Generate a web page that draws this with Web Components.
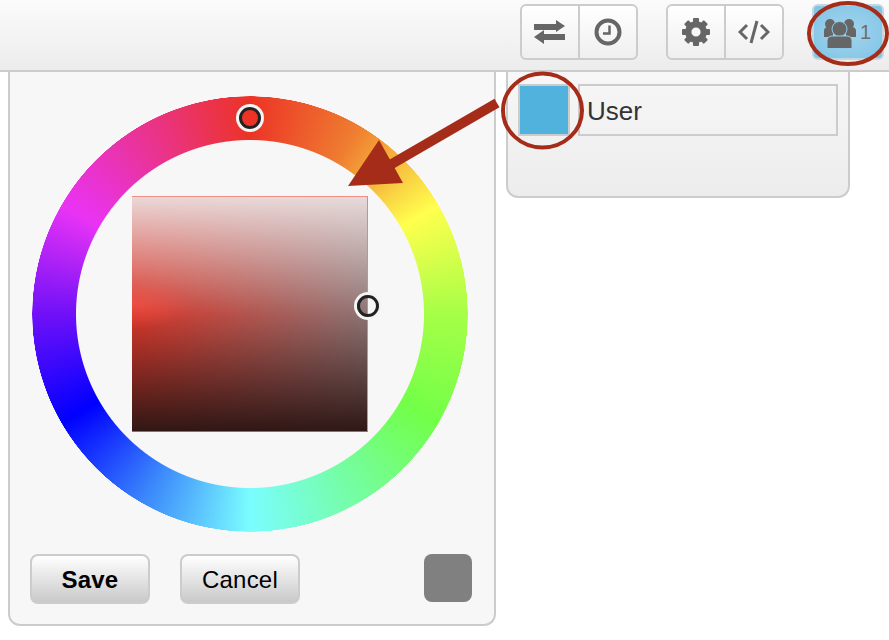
<!DOCTYPE html>
<html lang="en">
<head>
<meta charset="utf-8">
<title>Users</title>
<style>
  html, body { margin: 0; background: #fff; }
  body { font-family: 'Liberation Sans', Arial, sans-serif; color: #333; }
</style>
</head>
<body>
<color-app>
  <top-bar slot="bar">
    <tool-group>
      <tool-button>
        <svg width="32" height="24" viewBox="0 0 32 24" fill="#666"><path d="M0 4h22V0l9 6-9 6V10H0z"/><path d="M31 14H10V10L0 17l10 7V20H31z"/></svg>
      </tool-button>
      <tool-button>
        <svg width="28" height="28" viewBox="0 0 28 28" fill="none" stroke="#666"><circle cx="14" cy="14" r="11.500" stroke-width="4"/><path d="M15.500 7.500V15.500H9" stroke-width="2.500"/></svg>
      </tool-button>
    </tool-group>
    <tool-group>
      <tool-button>
        <svg width="28" height="28" viewBox="0 0 28 28" fill="#666">
          <circle cx="14" cy="14" r="7.700" fill="none" stroke="#666" stroke-width="6.200"/>
          <g>
            <rect x="11" y="0" width="6" height="6" rx="1"/>
            <rect x="11" y="0" width="6" height="6" rx="1" transform="rotate(45 14 14)"/>
            <rect x="11" y="0" width="6" height="6" rx="1" transform="rotate(90 14 14)"/>
            <rect x="11" y="0" width="6" height="6" rx="1" transform="rotate(135 14 14)"/>
            <rect x="11" y="0" width="6" height="6" rx="1" transform="rotate(180 14 14)"/>
            <rect x="11" y="0" width="6" height="6" rx="1" transform="rotate(225 14 14)"/>
            <rect x="11" y="0" width="6" height="6" rx="1" transform="rotate(270 14 14)"/>
            <rect x="11" y="0" width="6" height="6" rx="1" transform="rotate(315 14 14)"/>
          </g>
        </svg>
      </tool-button>
      <tool-button>
        <svg width="32" height="24" viewBox="0 0 32 24" fill="none" stroke="#666" stroke-width="3"><path d="M9 5 2 12l7 7M23 5l7 7-7 7"/><path d="M19 1 13 23"/></svg>
      </tool-button>
    </tool-group>
    <users-button count="1"></users-button>
  </top-bar>

  <picker-panel slot="picker"></picker-panel>
  <users-panel slot="users" name="User"></users-panel>
  <call-outs slot="notes"></call-outs>
</color-app>

<script>
const appTemplate = document.createElement('template')
appTemplate.innerHTML = `
  <style>
    :host { display: block; position: relative; width: 889px; height: 640px; overflow: hidden; }
    .main { display: flex; align-items: flex-start; padding-left: 8px; gap: 10px; }
  </style>
  <slot name="bar"></slot>
  <div class="main">
    <slot name="picker"></slot>
    <slot name="users"></slot>
  </div>
  <slot name="notes"></slot>
`
customElements.define('color-app', class extends HTMLElement {
  constructor () {
    super()
    this.attachShadow({ mode: 'open' }).appendChild(appTemplate.content.cloneNode(true))
  }
})

const barTemplate = document.createElement('template')
barTemplate.innerHTML = `
  <style>
    :host {
      display: flex;
      box-sizing: border-box;
      height: 72px;
      padding: 4px 5px 0 0;
      justify-content: flex-end;
      gap: 28px;
      background: linear-gradient(#fbfbfb, #ececec);
      border-bottom: 2px solid #ccc;
    }
  </style>
  <slot></slot>
`
customElements.define('top-bar', class extends HTMLElement {
  constructor () {
    super()
    this.attachShadow({ mode: 'open' }).appendChild(barTemplate.content.cloneNode(true))
  }
})

const groupTemplate = document.createElement('template')
groupTemplate.innerHTML = `
  <style>
    :host {
      display: flex;
      box-sizing: border-box;
      width: 118px;
      height: 56px;
      border: 2px solid #ccc;
      border-radius: 6px;
      background: linear-gradient(#fff, #efefef);
    }
    ::slotted(tool-button:first-child) { flex: 0 0 58px; border-right: 2px solid #ccc; }
  </style>
  <slot></slot>
`
customElements.define('tool-group', class extends HTMLElement {
  constructor () {
    super()
    this.attachShadow({ mode: 'open' }).appendChild(groupTemplate.content.cloneNode(true))
  }
})

const toolTemplate = document.createElement('template')
toolTemplate.innerHTML = `
  <style>
    :host { display: flex; flex: 1 1 0; box-sizing: border-box; align-items: center; justify-content: center; }
  </style>
  <slot></slot>
`
customElements.define('tool-button', class extends HTMLElement {
  constructor () {
    super()
    this.attachShadow({ mode: 'open' }).appendChild(toolTemplate.content.cloneNode(true))
  }
})

const usersButtonTemplate = document.createElement('template')
usersButtonTemplate.innerHTML = `
  <style>
    :host {
      display: flex;
      box-sizing: border-box;
      width: 72px;
      height: 56px;
      align-items: center;
      gap: 3px;
      padding-left: 9px;
      border: 2px solid #c6d6de;
      border-radius: 6px;
      background: radial-gradient(ellipse at center, #a3d4ec 0%, #8ecbe9 60%, #7ec2e4 100%);
      color: #6e6e6e;
      font-size: 20px;
    }
    svg { display: block; margin-top: 4px; }
  </style>
  <svg width="34" height="30" viewBox="0 0 34 30" fill="#666">
    <circle cx="7" cy="5" r="5"/>
    <circle cx="26" cy="5" r="5"/>
    <path d="M1 18v-6c0-3 2-4 4-4h5v10zM33 18v-6c0-3-2-4-4-4h-6v10z"/>
    <circle cx="16.500" cy="10" r="7.500" stroke="#8ecbe9" stroke-width="1"/>
    <path d="M4 29.500V22c0-3 2-5 5-5h15c3 0 5 2 5 5v7.500z" stroke="#8ecbe9" stroke-width="1"/>
  </svg>
  <span class="count"></span>
`
customElements.define('users-button', class extends HTMLElement {
  constructor () {
    super()
    this.attachShadow({ mode: 'open' }).appendChild(usersButtonTemplate.content.cloneNode(true))
    this.shadowRoot.querySelector('.count').textContent = this.getAttribute('count')
  }
})

const pickerTemplate = document.createElement('template')
pickerTemplate.innerHTML = `
  <style>
    :host {
      display: block;
      box-sizing: border-box;
      width: 488px;
      height: 554px;
      padding-top: 24px;
      border: 2px solid #ccc;
      border-top: 0;
      border-radius: 0 0 12px 12px;
      background: #f7f7f7;
    }
    .wheel {
      position: relative;
      display: grid;
      place-items: center;
      width: 436px;
      height: 436px;
      margin-left: 22px;
    }
    .ring {
      grid-area: 1 / 1;
      width: 436px;
      height: 436px;
      border-radius: 50%;
      background: conic-gradient(#ec3326 0deg, #ef7d30 30deg, #ffff4d 60deg, #a6fe47 90deg, #72ff48 120deg, #75fda4 150deg, #7afdff 180deg, #3a86fb 210deg, #0000ff 240deg, #7010f8 270deg, #e933f5 300deg, #ea3390 330deg, #ec3326 360deg);
      -webkit-mask: radial-gradient(closest-side, transparent 173.500px, #000 174.500px, #000 217.500px, transparent 218px);
      mask: radial-gradient(closest-side, transparent 173.500px, #000 174.500px, #000 217.500px, transparent 218px);
    }
    .square {
      grid-area: 1 / 1;
      box-sizing: border-box;
      width: 236px;
      height: 236px;
      border-top: 1px solid #ee8f86;
      border-right: 1px solid #a5a0a0;
      border-bottom: 1px solid #777;
      background:
        radial-gradient(ellipse 60px 24px at 0 46%, rgba(255,90,80,.45), rgba(255,90,80,0)),
        linear-gradient(to bottom, rgba(235,222,222,.96) 0%, rgba(235,222,222,0) 50%, rgba(45,22,20,0) 50%, rgba(45,22,20,.98) 100%),
        linear-gradient(to right, #d8362a, #8c7474);
    }
    .handle {
      position: absolute;
      box-sizing: border-box;
      width: 22px;
      height: 22px;
      border: 3px solid #222;
      border-radius: 50%;
      box-shadow: 0 0 0 3px #f4f4f4;
    }
    .hue { left: 207px; top: 11px; background: #ec3326; }
    .value { left: 325px; top: 199px; }
    .actions { display: flex; align-items: flex-start; gap: 30px; margin-top: 22px; padding: 0 22px 0 20px; }
    .current { width: 48px; height: 48px; margin-left: auto; border-radius: 8px; background: #808080; }
  </style>
  <div class="wheel">
    <div class="ring"></div>
    <div class="square"></div>
    <div class="handle hue"></div>
    <div class="handle value"></div>
  </div>
  <div class="actions">
    <picker-button strong>Save</picker-button>
    <picker-button>Cancel</picker-button>
    <div class="current"></div>
  </div>
`
customElements.define('picker-panel', class extends HTMLElement {
  constructor () {
    super()
    this.attachShadow({ mode: 'open' }).appendChild(pickerTemplate.content.cloneNode(true))
  }
})

const buttonTemplate = document.createElement('template')
buttonTemplate.innerHTML = `
  <style>
    :host {
      display: flex;
      box-sizing: border-box;
      width: 120px;
      height: 50px;
      padding-top: 1px;
      align-items: center;
      justify-content: center;
      border: 2px solid #ccc;
      border-radius: 8px;
      background: linear-gradient(#fff, #c9c9c9);
      color: #000;
      font-size: 24px;
      letter-spacing: .2px;
    }
    :host([strong]) { font-weight: bold; }
  </style>
  <slot></slot>
`
customElements.define('picker-button', class extends HTMLElement {
  constructor () {
    super()
    this.attachShadow({ mode: 'open' }).appendChild(buttonTemplate.content.cloneNode(true))
  }
})

const usersPanelTemplate = document.createElement('template')
usersPanelTemplate.innerHTML = `
  <style>
    :host {
      display: flex;
      box-sizing: border-box;
      width: 344px;
      height: 126px;
      padding: 12px 10px 0 10px;
      gap: 8px;
      align-items: flex-start;
      border: 2px solid #ccc;
      border-top: 0;
      border-radius: 0 0 12px 12px;
      background: linear-gradient(#f7f7f7, #ececec);
    }
    .swatch { box-sizing: border-box; width: 52px; height: 52px; border: 2px solid #ccc; background: #51b2de; }
    .name {
      box-sizing: border-box;
      flex: 1;
      height: 52px;
      padding-left: 7px;
      border: 2px solid #ccc;
      color: #333;
      font-size: 26px;
      line-height: 50px;
    }
  </style>
  <div class="swatch"></div>
  <div class="name"></div>
`
customElements.define('users-panel', class extends HTMLElement {
  constructor () {
    super()
    this.attachShadow({ mode: 'open' }).appendChild(usersPanelTemplate.content.cloneNode(true))
    this.shadowRoot.querySelector('.name').textContent = this.getAttribute('name')
  }
})

const notesTemplate = document.createElement('template')
notesTemplate.innerHTML = `
  <style>
    :host { position: absolute; inset: 0; pointer-events: none; }
    svg { display: block; }
  </style>
  <svg width="889" height="640" viewBox="0 0 889 640" fill="none" stroke="#a52c18" stroke-width="4">
    <ellipse cx="848" cy="33.500" rx="39" ry="30.500"/>
    <ellipse cx="542.500" cy="110.500" rx="39.500" ry="37"/>
    <path d="M497 103 390 165" stroke-width="10"/>
    <path d="M348 186 379 140 403 183z" fill="#a52c18" stroke="none"/>
  </svg>
`
customElements.define('call-outs', class extends HTMLElement {
  constructor () {
    super()
    this.attachShadow({ mode: 'open' }).appendChild(notesTemplate.content.cloneNode(true))
  }
})
</script>
</body>
</html>
